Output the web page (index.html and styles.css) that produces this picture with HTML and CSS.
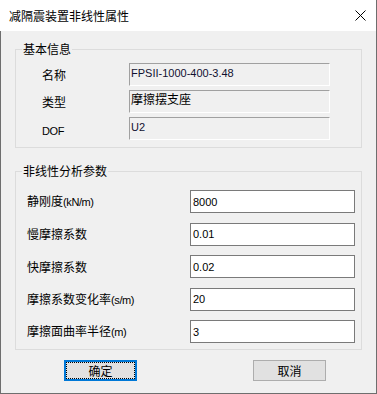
FILE: index.html
```html
<!DOCTYPE html>
<html lang="zh-CN">
<head>
    <meta charset="UTF-8">
    <title>减隔震装置非线性属性</title>
    <link rel="stylesheet" href="styles.css">
</head>
<body>
    <div class="dialog">
        <div class="titlebar">
            <span class="title">减隔震装置非线性属性</span>
            <svg class="close" width="11" height="11" viewBox="0 0 11 11">
                <path d="M0.5 0.5 L10.5 10.5 M10.5 0.5 L0.5 10.5" stroke="#000" stroke-width="1" fill="none"/>
            </svg>
        </div>
        <div class="content">
            <fieldset class="group">
                <legend>基本信息</legend>
                <div class="info-grid">
                    <span class="label">名称</span>
                    <div class="field field-en">FPSII-1000-400-3.48</div>
                    <span class="label">类型</span>
                    <div class="field">摩擦摆支座</div>
                    <span class="label label-en">DOF</span>
                    <div class="field field-en">U2</div>
                </div>
            </fieldset>

            <fieldset class="group group-params">
                <legend>非线性分析参数</legend>
                <div class="param-grid">
                    <label class="label">静刚度<span class="unit">(kN/m)</span></label>
                    <input type="text" value="8000">
                    <label class="label">慢摩擦系数</label>
                    <input type="text" value="0.01">
                    <label class="label">快摩擦系数</label>
                    <input type="text" value="0.02">
                    <label class="label">摩擦系数变化率<span class="unit">(s/m)</span></label>
                    <input type="text" value="20">
                    <label class="label">摩擦面曲率半径<span class="unit">(m)</span></label>
                    <input type="text" value="3">
                </div>
            </fieldset>

            <div class="actions">
                <button class="btn btn-default">确定</button>
                <button class="btn">取消</button>
            </div>
        </div>
    </div>
</body>
</html>
```

FILE: styles.css
```css
body {
    margin: 0;
    font-family: "Liberation Sans", "Noto Sans CJK SC", sans-serif;
    font-size: 12px;
    color: #000;
    background-color: #fff;
}

.dialog {
    width: 377px;
    height: 394px;
    display: flex;
    flex-direction: column;
    box-sizing: border-box;
    border-right: 1px solid #6e6e6e;
}

.titlebar {
    height: 31px;
    flex-shrink: 0;
    display: flex;
    align-items: center;
    justify-content: space-between;
    padding: 0 10px 0 9px;
    background-color: #fff;
}

.title {
    font-family: "Noto Sans CJK SC", sans-serif;
    font-size: 12px;
    line-height: 14px;
}

.close {
    display: block;
}

.content {
    flex: 1;
    background-color: #f0f0f0;
    border-left: 1px solid #6e6e6e;
    border-bottom: 1px solid #6e6e6e;
    padding: 11px 0 0 14px;
}

.group {
    margin: 0;
    width: 347px;
    box-sizing: border-box;
    border: 1px solid #dcdcdc;
    padding: 7px 0 7px 6px;
    min-inline-size: 0;
}

.group legend {
    padding: 0 1px;
    font-family: "Noto Sans CJK SC", sans-serif;
    font-size: 12px;
    line-height: 14px;
}

.group-params {
    margin-top: 16px;
    padding-top: 12px;
    padding-bottom: 6px;
}

.label {
    font-family: "Noto Sans CJK SC", sans-serif;
    font-size: 12px;
    line-height: 14px;
}

.label-en,
.unit {
    font-family: "Liberation Sans", sans-serif;
    font-size: 11px;
    letter-spacing: -0.4px;
}

.info-grid {
    display: grid;
    grid-template-columns: 87px 201px;
    grid-auto-rows: 23px;
    row-gap: 4px;
    align-items: center;
    margin-left: 20px;
}

.label-en {
    align-self: end;
    margin-bottom: 2px;
}

.field {
    height: 23px;
    box-sizing: border-box;
    border: 1px solid;
    border-color: #a0a0a0 #fff #fff #a0a0a0;
    padding: 1px 0 0 1px;
    font-family: "Noto Sans CJK SC", sans-serif;
    font-size: 12px;
    line-height: 14px;
}

.field-en {
    font-family: "Liberation Sans", sans-serif;
    font-size: 11px;
    padding-top: 2px;
    color: #101030;
}

.param-grid {
    display: grid;
    grid-template-columns: 163px 165px;
    grid-auto-rows: 23px;
    row-gap: 9.5px;
    align-items: center;
    margin-left: 5px;
}

.param-grid input {
    width: 165px;
    height: 23px;
    box-sizing: border-box;
    margin: 0;
    border: 1px solid #7a7a7a;
    padding: 0 2px;
    background-color: #fff;
    font-family: "Liberation Sans", sans-serif;
    font-size: 11px;
    color: #000;
    outline: none;
}

.actions {
    display: flex;
    gap: 116px;
    margin: 10px 0 0 49px;
}

.btn {
    width: 73px;
    height: 21px;
    box-sizing: border-box;
    margin: 0;
    padding: 0;
    border: 1px solid #adadad;
    background-color: #e1e1e1;
    font-family: "Noto Sans CJK SC", sans-serif;
    font-size: 12px;
    line-height: 14px;
    color: #000;
}

.btn-default {
    border-color: #0078d7;
    box-shadow: inset 0 0 0 1px #0078d7;
    outline: 1px dotted #000;
    outline-offset: -3px;
}
```
